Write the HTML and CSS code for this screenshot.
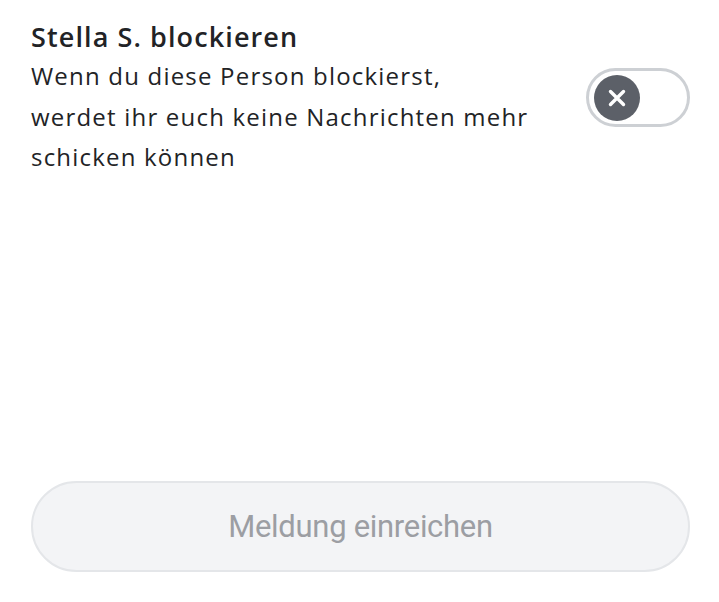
FILE: index.html
```html
<!DOCTYPE html>
<html lang="de">
<head>
<meta charset="utf-8">
<link rel="stylesheet" href="styles.css">
</head>
<body>
<div class="page">
  <div class="row">
    <div class="text">
      <h1 class="title">Stella S. blockieren</h1>
      <p class="desc">Wenn du diese Person blockierst,<br>werdet ihr euch keine Nachrichten mehr<br>schicken können</p>
    </div>
    <div class="toggle">
      <div class="knob">
        <svg width="20" height="20" viewBox="0 0 20 20"><path d="M3.5 3.5 L16.5 16.5 M16.5 3.5 L3.5 16.5" stroke="#fff" stroke-width="3.4" stroke-linecap="round"/></svg>
      </div>
    </div>
  </div>
  <div class="spacer"></div>
  <button class="submit">Meldung einreichen</button>
</div>
</body>
</html>
```
FILE: styles.css
```css
html, body { margin: 0; padding: 0; background: #fff; }
.page {
  width: 719px; height: 602px; box-sizing: border-box;
  padding: 19px 29px 30px 31px;
  display: flex; flex-direction: column;
  font-family: "Open Sans", "Noto Sans", sans-serif; color: #222326;
}
.row { display: flex; justify-content: space-between; align-items: flex-start; }
.title { margin: 0; font-size: 27px; font-weight: 600; line-height: 36px; letter-spacing: 1.1px; }
.desc { margin: 1px 0 0; font-size: 24px; line-height: 40.5px; font-weight: 400; letter-spacing: 1.2px; }
.toggle {
  margin-top: 49px; width: 104px; height: 59px; box-sizing: border-box;
  border: 3px solid #cdd0d4; border-radius: 30px; background: #fff;
  display: flex; align-items: center; padding-left: 5px;
}
.knob {
  width: 46px; height: 46px; border-radius: 50%; background: #5c6068;
  display: flex; align-items: center; justify-content: center;
}
.spacer { flex: 1; }
.submit {
  width: 659px; height: 91px; border-radius: 46px; box-sizing: border-box;
  border: 2px solid #e4e6e9; background: #f3f4f6; color: #9c9ea3;
  font-family: Roboto, sans-serif; font-size: 31px; font-weight: 400;
  letter-spacing: -0.3px;
}
```
